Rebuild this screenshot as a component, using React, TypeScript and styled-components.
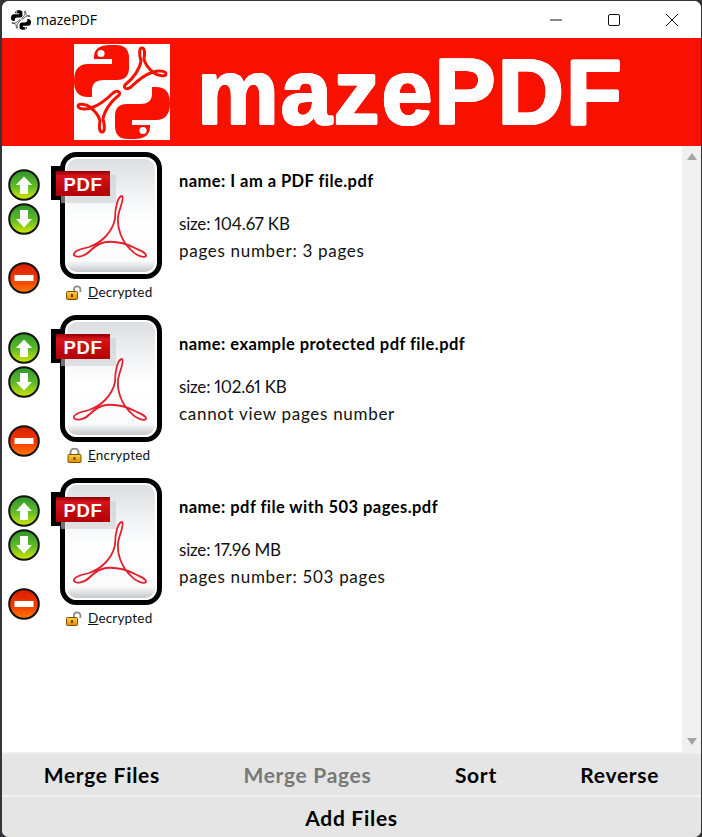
import React from "react";
import styled, { createGlobalStyle } from "styled-components";

const GlobalStyle = createGlobalStyle`
  html, body {
    margin: 0;
    padding: 0;
    background: #34343a;
    overflow: hidden;
  }
  * {
    box-sizing: border-box;
  }
`;

const files = [
  { name: "I am a PDF file.pdf", size: "size: 104.67 KB", pages: "pages number: 3 pages", locked: false },
  { name: "example protected pdf file.pdf", size: "size: 102.61 KB", pages: "cannot view pages number", locked: true },
  { name: "pdf file with 503 pages.pdf", size: "size: 17.96 MB", pages: "pages number: 503 pages", locked: false },
];

const Logo = ({ color, size }: { color: string; size: number }) => {
  const half = (
    <>
      <path
        d="M20 13Q20 1 36 1L42 1Q55 1 55 14L55 24Q55 36 43 36L30 36Q18 36 18 46L18 53L14 53Q0 53 0 37Q0 20 14 20L38 20L38 15L20 15Z"
        fill={color}
      />
      <circle cx="27" cy="9.5" r="3.6" fill="#fff" />
    </>
  );
  const swirl = (
    <path
      d="M68 4C65 4 65 10 67 17C66 24 60 34 52 40C48 43 52 47 57 43C63 37 70 31 79 28C85 26 92 27 92 30C92 33 84 32 80 29C75 25 71 20 70 15C71 10 71 4 68 4Z"
      fill="none"
      stroke={color}
      strokeWidth="3"
    />
  );
  return (
    <svg width={size} height={size} viewBox="0 0 96 96">
      {half}
      {swirl}
      <g transform="rotate(180 48 48)">{half}</g>
      <g transform="translate(0 -4) rotate(180 48 48)">{swirl}</g>
    </svg>
  );
};

const DocIcon = () => (
  <svg width="112" height="130" viewBox="0 0 112 130">
    <defs>
      <linearGradient id="docFill" x1="0" y1="0" x2="0" y2="1">
        <stop offset="0" stopColor="#dcdfe2" />
        <stop offset="0.35" stopColor="#f4f5f6" />
        <stop offset="0.55" stopColor="#ffffff" />
        <stop offset="0.9" stopColor="#fbfbfb" />
        <stop offset="1" stopColor="#c4c8cc" />
      </linearGradient>
      <linearGradient id="labelFill" x1="0" y1="0" x2="0" y2="1">
        <stop offset="0" stopColor="#8c0005" />
        <stop offset="0.2" stopColor="#d8141c" />
        <stop offset="1" stopColor="#b00006" />
      </linearGradient>
    </defs>
    <rect x="11.5" y="3.5" width="97" height="122" rx="14" fill="#fff" stroke="#000" strokeWidth="5" />
    <rect x="16" y="8" width="88" height="113" rx="10" fill="url(#docFill)" />
    <rect x="0" y="15" width="12" height="34" fill="#000" />
    <rect x="10" y="24" width="55" height="28" fill="#c9ccd0" opacity="0.55" />
    <rect x="5" y="20" width="54" height="25" fill="url(#labelFill)" />
    <text x="32" y="40" textAnchor="middle" fontFamily="'Liberation Sans', sans-serif" fontWeight="700" fontSize="18.5" letterSpacing="0.6" fill="#fff">
      PDF
    </text>
    <path
      d="M71 45C67 45 64 56 64 68C61 82 50 92 38 96C30 98 22 100 23 104C25 107 33 106 39 100C44 95 48 92 55 91C65 90 76 93 84 97C90 100 96 102 95 105C93 107 85 105 79 98C71 90 66 78 67 66C68 58 74 47 71 45Z"
      fill="none"
      stroke="#e3202c"
      strokeWidth="1.8"
    />
  </svg>
);

const LockIcon = ({ open }: { open: boolean }) => (
  <svg width="17" height="15" viewBox="0 0 17 15">
    <defs>
      <linearGradient id="lockFill" x1="0" y1="0" x2="0" y2="1">
        <stop offset="0" stopColor="#ffd24a" />
        <stop offset="1" stopColor="#e58a00" />
      </linearGradient>
    </defs>
    {open ? (
      <>
        <path d="M8 7V4.5a3.2 3.2 0 0 1 6.4 0V7" fill="none" stroke="#8d8d8d" strokeWidth="1.8" />
        <rect x="0.5" y="6.5" width="11" height="8" rx="1" fill="url(#lockFill)" stroke="#7a5200" />
        <rect x="5" y="9" width="2" height="3" fill="#6a4500" />
      </>
    ) : (
      <>
        <path d="M4.5 7V4.5a4 4 0 0 1 8 0V7" fill="none" stroke="#8d8d8d" strokeWidth="2" />
        <rect x="2" y="6.5" width="13" height="8" rx="1" fill="url(#lockFill)" stroke="#7a5200" />
        <rect x="7.5" y="9" width="2" height="3" fill="#6a4500" />
      </>
    )}
  </svg>
);

const RoundButton = ({ kind }: { kind: "up" | "down" | "remove" }) => {
  const id = `round-${kind}`;
  const isRemove = kind === "remove";
  return (
    <svg width="32" height="32" viewBox="0 0 32 32">
      <defs>
        <linearGradient id={id} x1="0" y1="0" x2="0" y2="1">
          <stop offset="0" stopColor={isRemove ? "#d81c00" : "#2a962a"} />
          <stop offset="0.55" stopColor={isRemove ? "#f23a00" : "#62bc28"} />
          <stop offset="1" stopColor={isRemove ? "#ff7a00" : "#d4e800"} />
        </linearGradient>
      </defs>
      <circle cx="16" cy="16" r="14.8" fill={`url(#${id})`} stroke="#111" strokeWidth="2" />
      {kind === "up" && <path d="M16 7.5L24 16H20V25H12V16H8Z" fill="#fff" />}
      {kind === "down" && <path d="M16 24.5L24 16H20V7H12V16H8Z" fill="#fff" />}
      {isRemove && <rect x="6.5" y="13" width="19" height="6" fill="#fff" />}
    </svg>
  );
};

export default function App() {
  return (
    <>
      <GlobalStyle />
      <Window>
        <TitleBar>
          <TitleIcon>
            <Logo color="#000" size={20} />
          </TitleIcon>
          <TitleText>mazePDF</TitleText>
          <Controls>
            <ControlButton>
              <svg width="12" height="12" viewBox="0 0 12 12">
                <path d="M0 6H12" stroke="#111" strokeWidth="1" />
              </svg>
            </ControlButton>
            <ControlButton>
              <svg width="12" height="12" viewBox="0 0 12 12">
                <rect x="0.5" y="0.5" width="11" height="11" rx="1.5" fill="none" stroke="#111" />
              </svg>
            </ControlButton>
            <ControlButton>
              <svg width="12" height="12" viewBox="0 0 12 12">
                <path d="M0 0L12 12M12 0L0 12" stroke="#111" strokeWidth="1" />
              </svg>
            </ControlButton>
          </Controls>
        </TitleBar>

        <Banner>
          <LogoTile>
            <Logo color="#f91100" size={96} />
          </LogoTile>
          <BannerText>mazePDF</BannerText>
        </Banner>

        <Middle>
          <FileList>
            {files.map((file) => (
              <FileRow key={file.name}>
                <Actions>
                  <RoundButton kind="up" />
                  <RoundButton kind="down" />
                  <RemoveSlot>
                    <RoundButton kind="remove" />
                  </RemoveSlot>
                </Actions>
                <Thumb>
                  <DocIcon />
                  <LockLine>
                    <LockIcon open={!file.locked} />
                    <LockLabel>
                      <u>{file.locked ? "E" : "D"}</u>
                      {file.locked ? "ncrypted" : "ecrypted"}
                    </LockLabel>
                  </LockLine>
                </Thumb>
                <Info>
                  <FileName>name: {file.name}</FileName>
                  <SizeLine>{file.size}</SizeLine>
                  <Meta>{file.pages}</Meta>
                </Info>
              </FileRow>
            ))}
          </FileList>
          <ScrollBar>
            <ScrollArrow $up />
            <ScrollArrow />
          </ScrollBar>
        </Middle>

        <ButtonRow>
          <ActionButton>Merge Files</ActionButton>
          <ActionButton $disabled>Merge Pages</ActionButton>
          <ActionButton>Sort</ActionButton>
          <ActionButton>Reverse</ActionButton>
        </ButtonRow>
        <ButtonRow>
          <ActionButton>Add Files</ActionButton>
        </ButtonRow>
      </Window>
    </>
  );
}

const Window = styled.div`
  width: 699px;
  height: 836px;
  margin: 1px 0 0 2px;
  background: #f0f0f0;
  border-radius: 7px;
  overflow: hidden;
  display: flex;
  flex-direction: column;
  font-family: "Lato", "Liberation Sans", sans-serif;
  color: #000;
`;

const TitleBar = styled.div`
  height: 37px;
  flex: none;
  background: #fff;
  display: flex;
  align-items: center;
`;

const TitleIcon = styled.div`
  width: 20px;
  height: 20px;
  margin-left: 9px;
  display: flex;
`;

const TitleText = styled.span`
  margin-left: 5px;
  font-family: "Open Sans", "Liberation Sans", sans-serif;
  font-size: 14px;
`;

const Controls = styled.div`
  margin-left: auto;
  display: flex;
`;

const ControlButton = styled.div`
  width: 58px;
  height: 37px;
  display: flex;
  align-items: center;
  justify-content: center;
`;

const Banner = styled.div`
  height: 108px;
  flex: none;
  background: #f91100;
  display: flex;
  align-items: center;
  padding-left: 72px;
`;

const LogoTile = styled.div`
  width: 96px;
  height: 96px;
  background: #fff;
  display: flex;
`;

const BannerText = styled.div`
  margin-left: 27px;
  font-family: "Liberation Sans", Arial, sans-serif;
  font-weight: 700;
  font-size: 92px;
  line-height: 108px;
  letter-spacing: 1.8px;
  color: #fff;
  text-shadow: 1.2px 0 0 #fff, -1.2px 0 0 #fff, 0 1.2px 0 #fff, 0 -1.2px 0 #fff, 0.8px 0.8px 0 #fff,
    -0.8px 0.8px 0 #fff, 0.8px -0.8px 0 #fff, -0.8px -0.8px 0 #fff;
`;

const Middle = styled.div`
  height: 606px;
  flex: none;
  display: flex;
  background: #fff;
`;

const FileList = styled.div`
  flex: 1;
  padding-top: 4px;
`;

const FileRow = styled.div`
  height: 163px;
  display: flex;
`;

const Actions = styled.div`
  width: 49px;
  padding: 19px 0 0 6px;
  display: flex;
  flex-direction: column;
  gap: 2px;

  svg {
    display: block;
  }
`;

const RemoveSlot = styled.div`
  margin-top: 25px;
`;

const Thumb = styled.div`
  width: 128px;
  display: flex;
  flex-direction: column;
  padding-top: 1px;

  svg {
    display: block;
  }
`;

const LockLine = styled.div`
  display: flex;
  align-items: center;
  gap: 5px;
  margin-top: 3px;
  padding-left: 15px;
`;

const LockLabel = styled.span`
  font-size: 13.5px;
  line-height: 16px;
  letter-spacing: 0.2px;
  color: #111;
`;

const Info = styled.div`
  padding-top: 20px;
`;

const FileName = styled.div`
  font-size: 16.5px;
  line-height: 22px;
  font-weight: 700;
  letter-spacing: 0.45px;
  margin-bottom: 18px;
`;

const Meta = styled.div`
  font-size: 17px;
  line-height: 27px;
  letter-spacing: 0.7px;
  color: #111;
`;

const SizeLine = styled(Meta)`
  letter-spacing: -0.2px;
  font-variant-numeric: proportional-nums;
`;

const ScrollBar = styled.div`
  width: 19px;
  background: #f0f0f0;
  display: flex;
  flex-direction: column;
  justify-content: space-between;
  align-items: center;
  padding: 7px 0;
`;

const ScrollArrow = styled.div<{ $up?: boolean }>`
  width: 0;
  height: 0;
  border-left: 5px solid transparent;
  border-right: 5px solid transparent;
  ${(p) => (p.$up ? "border-bottom: 7px solid #a6a6a6;" : "border-top: 7px solid #a6a6a6;")}
`;

const ButtonRow = styled.div`
  height: 41px;
  flex: none;
  margin-top: 2px;
  background: #e5e5e5;
  display: flex;
  align-items: center;
  justify-content: space-around;
`;

const ActionButton = styled.div<{ $disabled?: boolean }>`
  font-size: 21px;
  font-weight: 700;
  letter-spacing: 0.7px;
  color: ${(p) => (p.$disabled ? "#787878" : "#000")};
`;
